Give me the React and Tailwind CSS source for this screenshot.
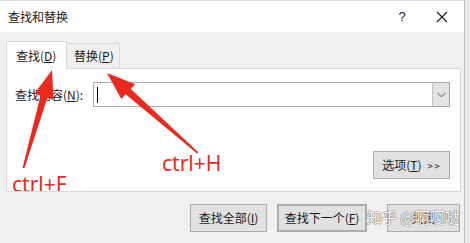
const cjk = { fontFamily: '"Noto Sans CJK SC", "Noto Sans", sans-serif' }

function Btn({ children, className = '' }) {
  return (
    <div className={`h-[28px] flex items-center justify-center border border-[#adadad] bg-[#e1e1e1] text-[12px] text-[#1a1a1a] ${className}`}>
      {children}
    </div>
  )
}

function Arrows() {
  return (
    <svg className="absolute left-0 top-0 pointer-events-none" width="470" height="243" viewBox="0 0 470 243">
      <polygon
        fill="#ea2a1f"
        points="22.5,168 24.5,168 47.5,97.5 53.5,100 52,70 34.5,93.5 40.5,95.8"
      />
      <polygon
        fill="#ea2a1f"
        points="198.5,152.5 197,153.5 125.6,94.2 121.3,99 107,73 135.2,84.2 130.8,88.9"
      />
    </svg>
  )
}

export default function App() {
  return (
    <div className="relative w-[470px] h-[243px] overflow-hidden flex bg-[#e9e9e9]" style={cjk}>
      <div className="w-[465px] h-full flex flex-col border-r border-[#bcbcbc] bg-[#f0f0f0]">
        {/* title bar */}
        <div className="h-[32px] bg-white flex items-center pl-[8px] text-[12px] text-[#1a1a1a] border-t border-[#dcdcdc]">
          <span className="flex-1">查找和替换</span>
          <span className="w-[20px] text-center text-[13px] mr-[24px]" style={{ fontFamily: '"Liberation Sans", sans-serif' }}>?</span>
          <svg width="12" height="12" viewBox="0 0 12 12" className="mr-[16px]">
            <path d="M1 1 L11 11 M11 1 L1 11" stroke="#1a1a1a" strokeWidth="1.1" />
          </svg>
        </div>

        {/* body */}
        <div className="flex-1 pl-[6px] pr-[3px] pt-[8px] flex flex-col">
          <div className="flex items-end h-[28px]">
            <div className="h-[28px] w-[61px] bg-white border border-b-0 border-[#d9d9d9] flex items-center pl-[9px] text-[12px] text-[#1a1a1a] relative z-10 -mb-px">
              <span>查找(<span className="underline">D</span>)</span>
            </div>
            <div className="h-[25px] w-[53px] bg-[#f0f0f0] border border-l-0 border-b-0 border-[#d9d9d9] flex items-center pl-[7px] text-[12px] text-[#1a1a1a]">
              <span>替换(<span className="underline">P</span>)</span>
            </div>
          </div>

          <div className="relative h-[124px] bg-white border border-[#d9d9d9] overflow-hidden">
            <div className="flex items-center pt-[13px] pl-[8px] pr-[10px]">
              <span className="w-[78px] text-[12px] text-[#1a1a1a]">查找内容(<span className="underline">N</span>):</span>
              <div className="flex-1 h-[25px] border border-[#a9a9a9] flex">
                <div className="flex-1 flex items-center pl-[3px]">
                  <div className="w-px h-[16px] bg-black" />
                </div>
                <div className="w-[17px] bg-[#e3e3e3] border-l border-[#c4c4c4] flex items-center justify-center">
                  <svg width="9" height="6" viewBox="0 0 9 6">
                    <path d="M0.5 0.8 L4.5 4.8 L8.5 0.8" stroke="#555" fill="none" strokeWidth="1" />
                  </svg>
                </div>
              </div>
            </div>

            <div className="flex justify-end pr-[10px] pt-[44px]">
              <Btn className="w-[77px] h-[27px] gap-[4px]">
                <span>选项(<span className="underline">T</span>)</span>
                <span className="text-[10px] tracking-[1px] ml-[2px]">&gt;&gt;</span>
              </Btn>
            </div>

            <span className="absolute left-[5px] top-[105px] text-[21px] leading-none text-[#ea2a1f]" style={{ fontFamily: '"Noto Sans", sans-serif' }}>ctrl+F</span>
            <span className="absolute left-[155px] top-[84px] text-[21px] leading-none text-[#ea2a1f]" style={{ fontFamily: '"Noto Sans", sans-serif' }}>ctrl+H</span>
          </div>

          <div className="flex items-center pt-[12px] pl-[184px]">
            <Btn className="w-[77px]">查找全部(<span className="underline">I</span>)</Btn>
            <Btn className="w-[90px] ml-[10px] border-[#0078d7] border-2">查找下一个(<span className="underline">F</span>)</Btn>
            <Btn className="w-[73px] ml-[20px]">
              <span>关闭</span>
            </Btn>
          </div>
        </div>
      </div>

      <Arrows />

      <span
        className="absolute left-[367px] top-[209px] text-[15px] leading-none text-white"
        style={{ textShadow: '0 0 1px #6f6f6f, 0 0 1px #6f6f6f, 0 0 1px #6f6f6f' }}
      >
        知乎 @啊啊哒
      </span>
    </div>
  )
}
